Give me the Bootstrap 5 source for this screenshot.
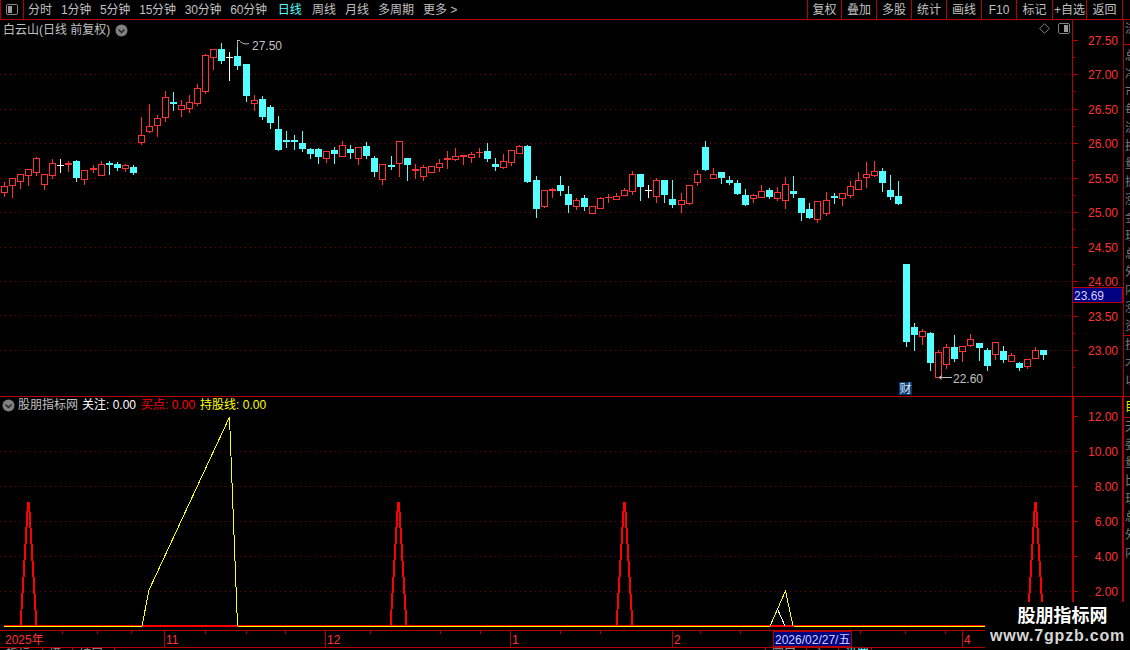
<!doctype html>
<html lang="zh-CN">
<head>
<meta charset="utf-8">
<title>白云山 日线</title>
<link rel="stylesheet" href="https://cdn.jsdelivr.net/npm/bootstrap@5.3.0/dist/css/bootstrap.min.css">
<style>
html,body{background:#000;margin:0;height:650px;overflow:hidden}
body{font:12px/1 "Liberation Sans","Noto Sans CJK SC",sans-serif;color:#c0c0c0;width:1130px;position:relative}
svg{display:block;shape-rendering:crispEdges}
svg text{font-family:"Liberation Sans","Noto Sans CJK SC",sans-serif;font-size:12px;shape-rendering:auto}
.tb{height:20px;border-bottom:1px solid #b40000}
.tb-icon{width:24px;height:19px;border-left:1px solid #b40000;border-right:1px solid #b40000}
.tb-nav{padding-left:4px;gap:9px}
.tb-num{letter-spacing:-.2px}
.tb-on{color:#54ffff;margin-left:2px}
.tb-wk{margin-left:1px}
.tb-tools{margin-left:auto;padding-right:7px;width:323px}
.tb-cell{width:35px;height:19px;border-left:1px solid #b40000;flex:none}
.tb-cell:nth-child(1){width:34px}
.tb-cell:nth-child(7){width:36px}
.tb-cell:nth-child(8){width:34px}
.tb-cell:nth-child(9){width:37px;border-right:1px solid #b40000}
.pane-a{height:377px;border-bottom:1px solid #b40000}
.pane-b{height:233px}
.pane-head{left:3px;height:18px;gap:5px}
.pane-a .pane-head{top:1px}
.pane-b .pane-head{top:0;left:2px;height:16px;gap:0}
.hd-name{margin:0 4px 0 3px}
.hd-white{color:#fff;margin-right:5px}
.hd-red{color:#f00;margin-right:5px}
.hd-yellow{color:#ff0}
.pane-tools{right:60px;top:3px;gap:8px}
.side{width:7px;border-left:1px solid #b40000;flex:none;color:#7c7c7c}
.side-row{height:18px;padding-left:1px;white-space:nowrap;line-height:18px}
.side-top{height:25px;border-bottom:1px solid #b40000}
.side-mid{height:291px;border-bottom:1px solid #b40000;padding-top:2px}
.side-mark{color:#e8e800;height:21px;border-bottom:1px solid #b40000;padding:4px 0 0 1px;white-space:nowrap}
.time-row{height:18px;border-top:1px solid #b40000;border-bottom:1px solid #b40000}
.foot{height:2px;color:#909090}
.foot-cell{border-right:1px solid #b40000;padding-left:6px;white-space:nowrap}
.foot-a{width:43px}.foot-b{width:30px}.foot-c{width:42px}.foot-d{width:651px}.foot-e{width:41px}.foot-f{width:32px}.foot-g{width:33px;color:#54ffff}
.stamp{right:0;bottom:0;width:145px;height:48px;background:#000}
.stamp-cn{font-size:18px;font-weight:700;color:#fff;font-family:"Noto Sans CJK SC",sans-serif;line-height:24px;padding-left:10px}
.stamp-url{font-size:16px;font-weight:700;color:#d6d6d6;letter-spacing:.8px;line-height:19px}
</style>
</head>
<body>
<div class="tb d-flex align-items-center text-nowrap">
  <div class="tb-icon d-flex align-items-center justify-content-center">
    <svg width="12" height="11" viewBox="0 0 12 11"><rect x=".5" y=".5" width="11" height="10" rx="2" fill="#000" stroke="#808080"/><rect x="2" y="2" width="4" height="7" fill="#9a9a9a"/></svg>
  </div>
  <div class="tb-nav d-flex align-items-center">
    <span>分时</span><span class="tb-num">1分钟</span><span class="tb-num">5分钟</span><span class="tb-num">15分钟</span><span class="tb-num">30分钟</span><span class="tb-num">60分钟</span><span class="tb-on">日线</span><span class="tb-wk">周线</span><span>月线</span><span>多周期</span><span>更多 &gt;</span>
  </div>
  <div class="tb-tools d-flex align-items-center">
    <div class="tb-cell d-flex align-items-center justify-content-center">复权</div>
    <div class="tb-cell d-flex align-items-center justify-content-center">叠加</div>
    <div class="tb-cell d-flex align-items-center justify-content-center">多股</div>
    <div class="tb-cell d-flex align-items-center justify-content-center">统计</div>
    <div class="tb-cell d-flex align-items-center justify-content-center">画线</div>
    <div class="tb-cell d-flex align-items-center justify-content-center">F10</div>
    <div class="tb-cell d-flex align-items-center justify-content-center">标记</div>
    <div class="tb-cell d-flex align-items-center justify-content-center">+自选</div>
    <div class="tb-cell d-flex align-items-center justify-content-center">返回</div>
  </div>
</div>

<div class="pane-a d-flex position-relative">
  <div id="mainChart"></div>
  <div id="mainAxis"></div>
  <div class="side overflow-hidden">
    <div class="side-top"><div class="side-row">流通</div></div>
    <div class="side-mid">
      <div class="side-row">总</div><div class="side-row">净</div><div class="side-row">市</div><div class="side-row">每</div><div class="side-row">流</div><div class="side-row">换</div><div class="side-row">量</div><div class="side-row">振</div><div class="side-row">涨</div><div class="side-row">金</div><div class="side-row">现</div><div class="side-row">总</div><div class="side-row">外</div><div class="side-row">内</div><div class="side-row">涨</div><div class="side-row">资</div>
    </div>
    <div class="side-row">技</div><div class="side-row">术</div><div class="side-row">以</div>
  </div>
  <div class="pane-head position-absolute d-flex align-items-center">
    <span>白云山(日线 前复权)</span>
    <svg width="13" height="13" viewBox="0 0 13 13"><circle cx="6.5" cy="6.5" r="6" fill="#808080" style="shape-rendering:auto"/><path d="M3.5 5.5l3 3 3-3" fill="none" stroke="#222" stroke-width="1.4" style="shape-rendering:auto"/></svg>
  </div>
  <div class="pane-tools position-absolute d-flex align-items-center">
    <svg width="11" height="11" viewBox="0 0 11 11"><path d="M5.5.7L10.3 5.5 5.5 10.3.7 5.5z" fill="none" stroke="#808080" style="shape-rendering:auto"/></svg>
    <svg width="12" height="11" viewBox="0 0 12 11"><rect x=".5" y=".5" width="11" height="10" rx="2" fill="#000" stroke="#808080"/><rect x="6" y="2" width="4" height="7" fill="#9a9a9a"/></svg>
  </div>
</div>

<div class="pane-b d-flex position-relative">
  <div id="subChart"></div>
  <div id="subAxis"></div>
  <div class="side overflow-hidden">
    <div class="side-mark">目</div>
    <div class="side-row">天</div><div class="side-row">委</div><div class="side-row">量</div><div class="side-row">比</div><div class="side-row">现</div><div class="side-row">总</div><div class="side-row">外</div><div class="side-row">内</div>
  </div>
  <div class="pane-head position-absolute d-flex align-items-center text-nowrap">
    <svg width="13" height="13" viewBox="0 0 13 13"><circle cx="6.5" cy="6.5" r="6" fill="#808080" style="shape-rendering:auto"/><path d="M3.5 5.5l3 3 3-3" fill="none" stroke="#222" stroke-width="1.4" style="shape-rendering:auto"/></svg>
    <span class="hd-name">股朋指标网</span>
    <span class="hd-white">关注: 0.00</span>
    <span class="hd-red">买点: 0.00</span>
    <span class="hd-yellow">持股线: 0.00</span>
  </div>
</div>

<div class="time-row" id="timeRow"></div>
<div class="foot d-flex overflow-hidden">
  <div class="foot-cell foot-a">指标</div>
  <div class="foot-cell foot-b">模</div>
  <div class="foot-cell foot-c">扩展</div>
  <div class="foot-cell foot-d"></div>
  <div class="foot-cell foot-e">窗口</div>
  <div class="foot-cell foot-f">主</div>
  <div class="foot-cell foot-g">设置</div>
</div>

<div class="stamp position-absolute text-center overflow-hidden">
  <div class="stamp-cn">股朋指标网</div>
  <div class="stamp-url">www.7gpzb.com</div>
</div>

<script src="https://cdn.jsdelivr.net/npm/bootstrap@5.3.0/dist/js/bootstrap.bundle.min.js"></script>
<script>
// type, high, body top, body bottom, low  (screen pixels)
const K=[["r",182,186,192,196],["r",178,178,185,197],["r",174,174,181,188],["r",169,169,175,185],["r",157,158,172,175],["r",174,174,184,189],["r",159,163,175,178],["w",159,165,165,172],["r",161,163,165,171],["c",160,161,178,181],["r",170,170,179,184],["r",165,168,170,172],["r",161,164,175,175],["c",161,163,163,174],["c",162,164,168,170],["r",164,165,168,171],["c",165,167,173,174],
["r",117,135,142,144],["r",104,126,131,132],["r",115,118,125,136],["r",91,97,117,121],["c",92,102,103,110],["r",100,105,109,116],["r",95,102,108,112],["r",84,88,103,105],["r",54,55,91,93],["r",49,49,57,69],["c",43,49,61,63],["w",52,57,57,80],["c",40,56,66,69],["c",64,64,96,101],["r",95,100,103,110],["c",96,99,117,119],["c",105,107,123,128],["c",116,129,150,150],["c",131,140,141,147],["c",135,140,141,149],["c",131,143,149,151],["c",148,149,154,158],["c",148,149,157,163],["r",151,151,158,162],["c",147,150,154,163],["r",141,145,156,156],["c",145,149,153,158],["r",147,147,158,164],["c",142,146,156,158],["c",156,158,172,176],["r",164,164,179,184],["c",156,165,166,169],["r",141,141,163,176],["c",158,158,165,180],["r",164,169,171,178],["r",165,167,176,180],["r",166,166,172,172],["r",159,163,167,171],["r",151,158,160,168],["r",148,156,159,160],["r",155,155,157,164],["r",152,154,157,162],["r",148,152,153,157],
["c",143,151,159,161],["c",158,164,167,170],["r",154,161,167,168],["r",150,150,162,165],["r",145,146,153,153],["c",145,146,182,182],["c",176,180,209,217],["r",190,190,206,207],["r",188,189,191,197],["c",176,185,191,195],["c",186,194,205,212],["r",198,200,206,209],["c",195,198,207,210],["r",206,206,213,213],["r",197,198,208,208],["r",194,197,198,202],["r",193,196,199,199],["r",188,190,195,195],["r",171,174,191,194],["c",174,174,187,200],["w",185,190,190,197],["r",178,180,196,202],["c",180,180,195,202],["c",180,199,205,207],["r",193,200,204,212],["r",185,185,203,204],["r",170,174,182,185],["c",141,147,170,170],["r",168,174,178,178],["c",172,172,178,183],["c",176,180,183,184],["c",180,183,194,194],["c",189,195,205,205],["r",194,195,198,202],["r",185,191,197,197],["c",188,190,197,198],["r",187,192,198,200],["r",177,184,200,208],["c",176,191,194,197],["c",198,198,213,220],["c",203,209,218,218],["r",201,201,219,222],["r",192,200,213,215],["c",193,196,196,203],["r",193,193,198,205],["r",181,186,195,197],["r",172,180,189,189],["r",162,174,177,187],["r",161,171,175,176],["c",168,171,183,191],["c",175,190,197,199],["c",181,196,204,204],
["c",264,264,342,346],["c",323,327,335,350],["r",329,331,336,344],["c",332,333,363,370],["r",350,352,377,377],["r",344,347,364,368],["c",335,347,359,361],["r",346,346,351,361],["r",334,339,345,346],["c",343,343,348,360],["c",348,350,366,370],["r",342,342,354,359],["c",346,351,360,362],["r",353,355,361,361],["c",362,363,368,370],["r",359,359,366,368],["r",347,350,358,358],["c",350,350,355,359]];
const RED="#ff3232",CY="#54ffff",GRID="#800000",AX="#b40000",LBL="#ff3232";
const box=(x,y,w,h,f)=>`<rect x="${x}" y="${y}" width="${w}" height="${h}" fill="${f}"/>`;
const dots=(y,x2)=>`<line x1="0" y1="${y+.5}" x2="${x2}" y2="${y+.5}" stroke="${GRID}" stroke-dasharray="1 4"/>`;
const txt=(x,y,s,f,a)=>`<text x="${x}" y="${y}" fill="${f}"${a?` text-anchor="${a}"`:""}>${s}</text>`;

// main chart
let m="";
[74,109,143,178,212,247,281,315,350].forEach(y=>m+=dots(y,1072));
K.forEach((k,i)=>{
  const [t,hi,top,bot,lo]=k,cx=Math.floor(4.4+8.055*i),col=t==="r"?RED:t==="c"?CY:"#fff",h=bot-top;
  if(t==="r"&&h>2){
    m+=box(cx,hi,1,top-hi,col)+box(cx,bot,1,lo-bot+1,col);
    m+=`<rect x="${cx-2.5}" y="${top+.5}" width="6" height="${h}" fill="#000" stroke="${col}"/>`;
  }else{
    m+=box(cx,hi,1,lo-hi+1,col);
    m+=box(cx-3,top,7,Math.max(h,t==="w"?1:t==="c"&&h<3?2:h),col);
  }
});
m+=`<path d="M237.5 47V40.5H240M240 41.5l3 2 3 .5 3-.5" fill="none" stroke="#b0b0b0" stroke-width="1" style="shape-rendering:auto"/>`;
m+=txt(252,50,"27.50","#c0c0c0");
m+=`<path d="M939 377.5H952M939 377.5l3-2M939 377.5l3 2" fill="none" stroke="#c0c0c0" stroke-width="1" style="shape-rendering:auto"/>`;
m+=txt(953,383,"22.60","#c0c0c0");
m+=box(899,382,13,13,"#0a3a6e")+txt(899.5,393,"财","#dcebff");
document.getElementById("mainChart").innerHTML=`<svg width="1072" height="376" viewBox="0 20 1072 376">${m}</svg>`;

// main axis
let a=box(1072,20,1,376,AX);
for(let i=0;i<=9;i++){
  const y=Math.round(40+i*34.45),p=(27.5-i*.5).toFixed(2);
  a+=box(1072,y,6,1,AX);
  a+=box(1072,Math.round(y+17),3,1,AX);
  a+=txt(1118,y+4.5,p,LBL,"end");
}
a+=`<rect x="1072.5" y="287.5" width="50" height="15" fill="#000080" stroke="${AX}"/>`+txt(1074,299.5,"23.69","#d0d0ff");
document.getElementById("mainAxis").innerHTML=`<svg width="51" height="376" viewBox="1072 20 51 376">${a}</svg>`;

// indicator
let s="";
[451,486,521,556,591].forEach(y=>s+=dots(y,1072));
const line=(p,c,w)=>`<polyline points="${p}" fill="none" stroke="${c}" stroke-width="${w}"/>`;
s+=box(4,625,981,1,"#ff0000")+box(4,626,981,1,"#ffff00");
s+=box(142,625,96,2,"#ff0000")+box(770,625,24,2,"#ff0000");
[28.5,398.5,624.5,1035.5].forEach(c=>{s+=line(`${c-8},626 ${c-.5},503 ${c+.5},503 ${c+8},626`,"#ff0000",2)});
s+=line("142,626 149,590 229.5,417 237.5,626","#ffff00",1);
s+=line("770,626 785.5,591 793,626","#ffff00",1);
s+=line("777,608 785,626","#ffffff",1);
document.getElementById("subChart").innerHTML=`<svg width="1072" height="233" viewBox="0 397 1072 233">${s}</svg>`;

let b=box(1072,397,2,233,AX)+box(1122,397,1,233,AX);
[12,10,8,6,4,2].forEach((v,i)=>{const y=416+i*35;b+=box(1072,y,6,1,AX)+txt(1118,y+4.5,v.toFixed(2),LBL,"end")});
document.getElementById("subAxis").innerHTML=`<svg width="51" height="233" viewBox="1072 397 51 233">${b}</svg>`;

// time axis
let t="";
[62,97,131,205,246,285,370,440,480,560,600,700,740,800,860,905,945,1000].forEach(x=>t+=box(x,631,1,3,AX));
[[5,"2025年"],[166,"11"],[327,"12"],[512,"1"],[674,"2"],[964,"4"]].forEach(([x,l])=>{t+=txt(x,643.5,l,LBL)});
[164,325,510,672,962].forEach(x=>t+=box(x,631,1,16,AX));
t+=`<rect x="773.5" y="631.5" width="78" height="15" fill="#000080" stroke="${AX}"/>`+txt(775,643.5,"2026/02/27/五","#d0d0ff");
document.getElementById("timeRow").innerHTML=`<svg width="1130" height="16" viewBox="0 631 1130 16">${t}</svg>`;
</script>
</body>
</html>
